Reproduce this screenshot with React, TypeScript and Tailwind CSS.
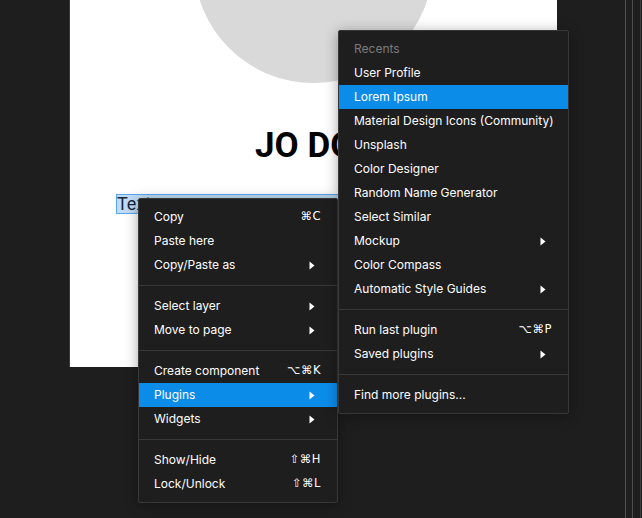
import React from 'react';

type Item =
   | { kind: 'item'; label: string; shortcut?: string; sub?: boolean; active?: boolean; muted?: boolean }
   | { kind: 'sep' };

const mainItems: Item[] = [
   { kind: 'item', label: 'Copy', shortcut: '⌘C' },
   { kind: 'item', label: 'Paste here' },
   { kind: 'item', label: 'Copy/Paste as', sub: true },
   { kind: 'sep' },
   { kind: 'item', label: 'Select layer', sub: true },
   { kind: 'item', label: 'Move to page', sub: true },
   { kind: 'sep' },
   { kind: 'item', label: 'Create component', shortcut: '⌥⌘K' },
   { kind: 'item', label: 'Plugins', sub: true, active: true },
   { kind: 'item', label: 'Widgets', sub: true },
   { kind: 'sep' },
   { kind: 'item', label: 'Show/Hide', shortcut: '⇧⌘H' },
   { kind: 'item', label: 'Lock/Unlock', shortcut: '⇧⌘L' },
];

const pluginItems: Item[] = [
   { kind: 'item', label: 'Recents', muted: true },
   { kind: 'item', label: 'User Profile' },
   { kind: 'item', label: 'Lorem Ipsum', active: true },
   { kind: 'item', label: 'Material Design Icons (Community)' },
   { kind: 'item', label: 'Unsplash' },
   { kind: 'item', label: 'Color Designer' },
   { kind: 'item', label: 'Random Name Generator' },
   { kind: 'item', label: 'Select Similar' },
   { kind: 'item', label: 'Mockup', sub: true },
   { kind: 'item', label: 'Color Compass' },
   { kind: 'item', label: 'Automatic Style Guides', sub: true },
   { kind: 'sep' },
   { kind: 'item', label: 'Run last plugin', shortcut: '⌥⌘P' },
   { kind: 'item', label: 'Saved plugins', sub: true },
   { kind: 'sep' },
   { kind: 'item', label: 'Find more plugins...' },
];

const Arrow = () => (
   <svg width="6" height="9" viewBox="0 0 6 9" className="mr-[6px] shrink-0">
      <path d="M0.5 0.5 L5.5 4.5 L0.5 8.5 Z" fill="#ffffff" />
   </svg>
);

const Menu: React.FC<{ items: Item[]; className: string }> = ({ items, className }) => (
   <div
      className={`absolute bg-[#1e1e1e] border border-[#383838] rounded-[2px] py-[6px] shadow-[0_2px_14px_rgba(0,0,0,0.35)] ${className}`}
   >
      {items.map((item, i) =>
         item.kind === 'sep' ? (
            <div key={i} className="py-2">
               <div className="h-px bg-[#383838]" />
            </div>
         ) : (
            <div
               key={i}
               className={`h-6 flex items-center justify-between pl-[15px] pr-4 text-[12px] whitespace-nowrap ${
                  item.active ? 'bg-[#0c8ce9]' : ''
               } ${item.muted ? 'text-[#7b7b7b]' : 'text-white'}`}
            >
               <span>{item.label}</span>
               {item.shortcut && (
                  <span className="tracking-[0.5px]" style={{ fontFamily: '"DejaVu Sans", Inter, sans-serif', fontSize: 11.5 }}>
                     {item.shortcut}
                  </span>
               )}
               {item.sub && <Arrow />}
            </div>
         )
      )}
   </div>
);

export default function App() {
   return (
      <div
         className="relative w-[642px] h-[518px] overflow-hidden bg-[#1e1e1e]"
         style={{ fontFamily: 'Inter, "Noto Sans", sans-serif' }}
      >
         {/* canvas frame */}
         <div className="absolute left-[69px] top-0 w-[488px] h-[367px] bg-white border-l border-[#3a3a3a] overflow-hidden">
            <div className="absolute left-[124px] top-[-156px] w-[239px] h-[239px] rounded-full bg-[#d9d9d9]" />
            <div
               className="absolute left-0 right-0 top-[126px] text-center text-black font-bold text-[35px] leading-[40px] pl-[2px]"
               style={{ fontFamily: 'Roboto, sans-serif' }}
            >
               JO DOE
            </div>
            <div
               className="absolute left-[46px] top-[194px] w-[300px] h-[20px] bg-[#bfdcf6] border border-[#58a7ef] text-[18px] leading-[18px] text-[#17253a]"
               style={{ fontFamily: 'Roboto, sans-serif' }}
            >
               Text
            </div>
         </div>

         {/* right panel edges */}
         <div className="absolute top-0 bottom-0 left-[625px] w-px bg-[#4e4e4e]" />
         <div className="absolute top-0 bottom-0 left-[632px] w-px bg-[#4e4e4e]" />
         <div className="absolute top-0 bottom-0 left-[640px] w-px bg-[#3e3e3e]" />

         <Menu items={mainItems} className="left-[138px] top-[198px] w-[200px]" />
         <Menu items={pluginItems} className="left-[338px] top-[30px] w-[231px]" />
      </div>
   );
}
